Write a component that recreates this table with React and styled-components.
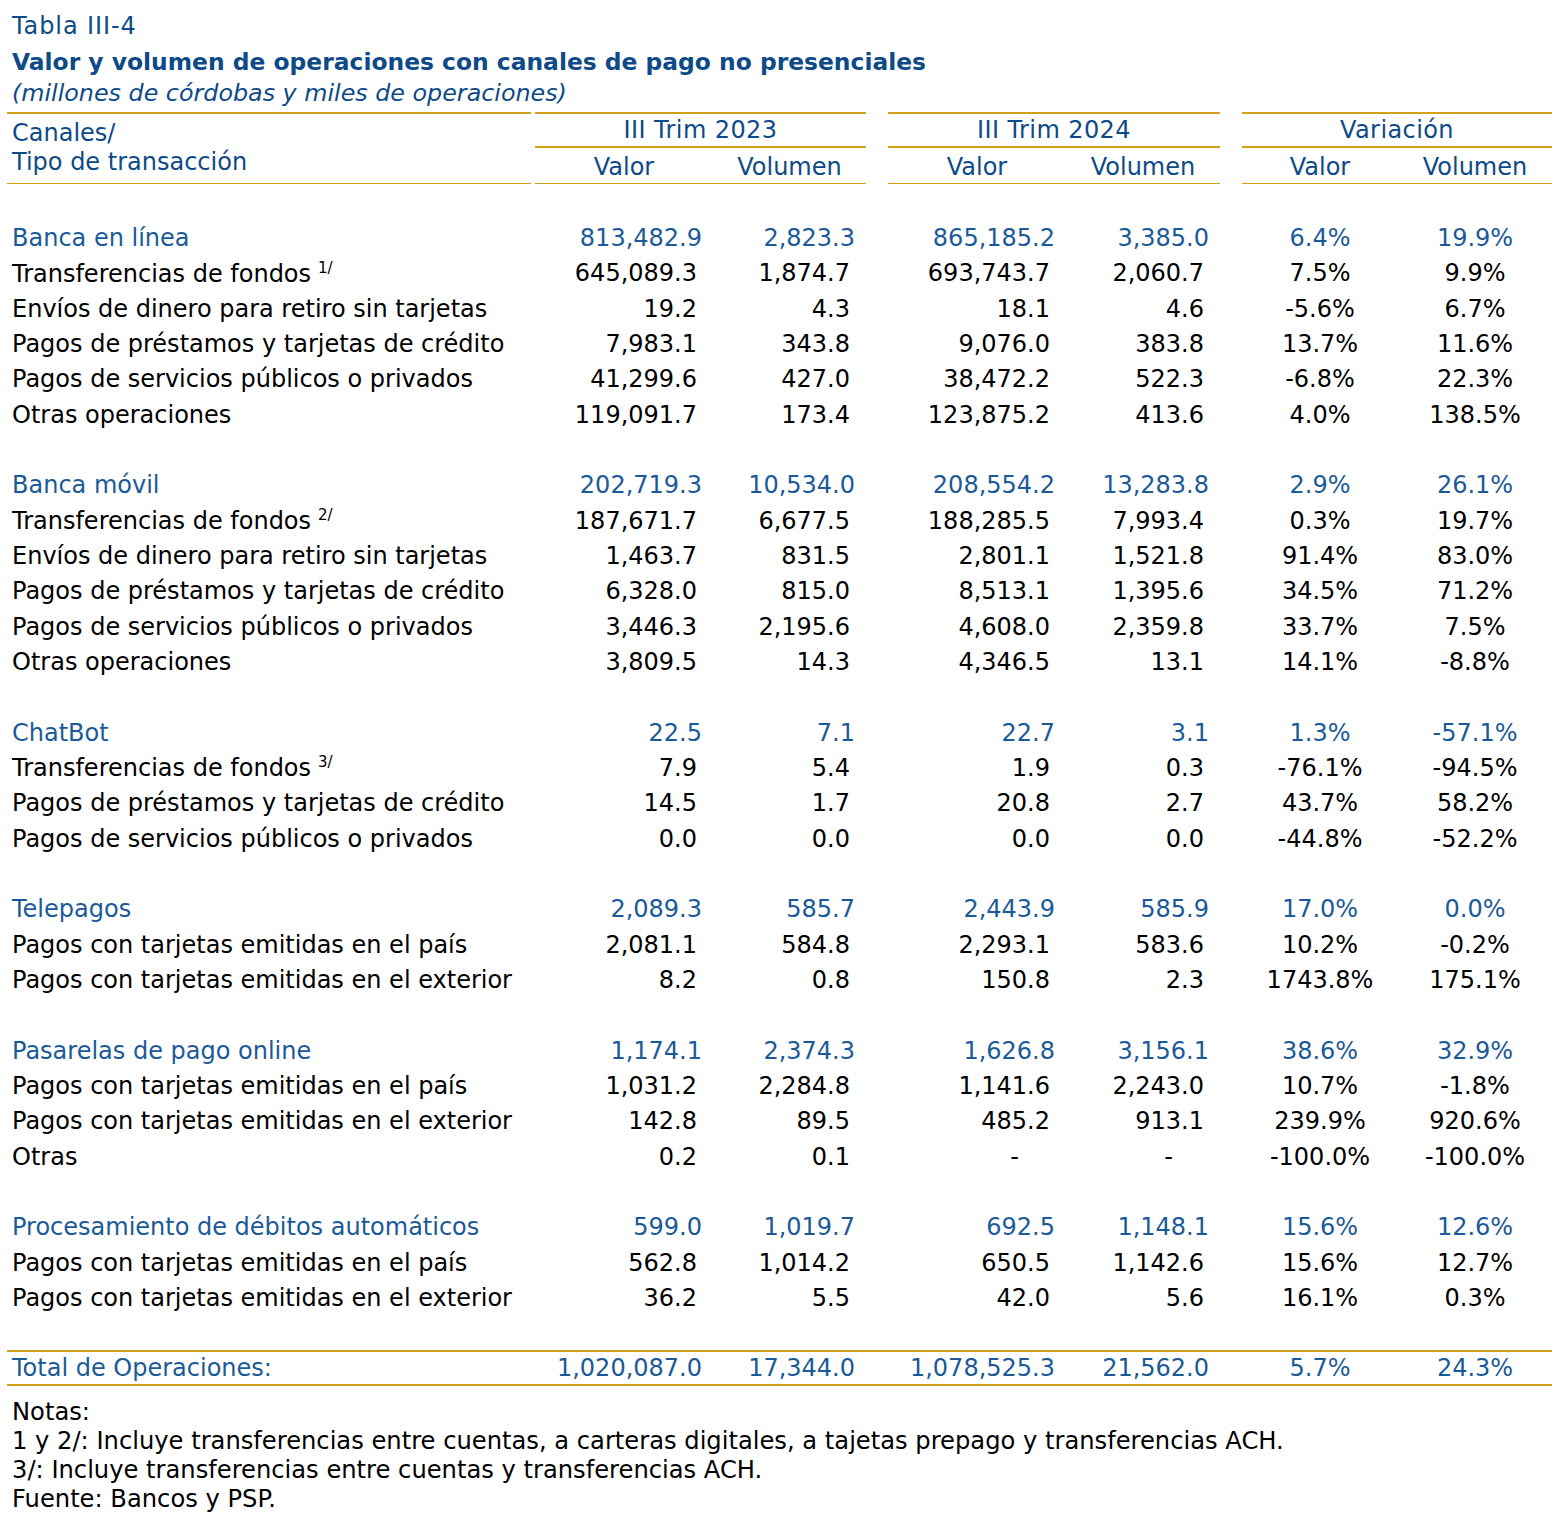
import React from "react";
import styled, { createGlobalStyle } from "styled-components";

const BLUE = "#1b5a98";
const NAVY = "#0d4a87";
const GOLD = "#d4a017";
const COLS = "524px 4px 178px 153px 22px 178px 154px 22px 156px 154px";
const ROW_H = "35.33px";

const sections = [
  {
    name: "Banca en línea",
    total: ["813,482.9", "2,823.3", "865,185.2", "3,385.0", "6.4%", "19.9%"],
    rows: [
      ["Transferencias de fondos", "1/", "645,089.3", "1,874.7", "693,743.7", "2,060.7", "7.5%", "9.9%"],
      ["Envíos de dinero para retiro sin tarjetas", null, "19.2", "4.3", "18.1", "4.6", "-5.6%", "6.7%"],
      ["Pagos de préstamos y tarjetas de crédito", null, "7,983.1", "343.8", "9,076.0", "383.8", "13.7%", "11.6%"],
      ["Pagos de servicios públicos o privados", null, "41,299.6", "427.0", "38,472.2", "522.3", "-6.8%", "22.3%"],
      ["Otras operaciones", null, "119,091.7", "173.4", "123,875.2", "413.6", "4.0%", "138.5%"],
    ],
  },
  {
    name: "Banca móvil",
    total: ["202,719.3", "10,534.0", "208,554.2", "13,283.8", "2.9%", "26.1%"],
    rows: [
      ["Transferencias de fondos", "2/", "187,671.7", "6,677.5", "188,285.5", "7,993.4", "0.3%", "19.7%"],
      ["Envíos de dinero para retiro sin tarjetas", null, "1,463.7", "831.5", "2,801.1", "1,521.8", "91.4%", "83.0%"],
      ["Pagos de préstamos y tarjetas de crédito", null, "6,328.0", "815.0", "8,513.1", "1,395.6", "34.5%", "71.2%"],
      ["Pagos de servicios públicos o privados", null, "3,446.3", "2,195.6", "4,608.0", "2,359.8", "33.7%", "7.5%"],
      ["Otras operaciones", null, "3,809.5", "14.3", "4,346.5", "13.1", "14.1%", "-8.8%"],
    ],
  },
  {
    name: "ChatBot",
    total: ["22.5", "7.1", "22.7", "3.1", "1.3%", "-57.1%"],
    rows: [
      ["Transferencias de fondos", "3/", "7.9", "5.4", "1.9", "0.3", "-76.1%", "-94.5%"],
      ["Pagos de préstamos y tarjetas de crédito", null, "14.5", "1.7", "20.8", "2.7", "43.7%", "58.2%"],
      ["Pagos de servicios públicos o privados", null, "0.0", "0.0", "0.0", "0.0", "-44.8%", "-52.2%"],
    ],
  },
  {
    name: "Telepagos",
    total: ["2,089.3", "585.7", "2,443.9", "585.9", "17.0%", "0.0%"],
    rows: [
      ["Pagos con tarjetas emitidas en el país", null, "2,081.1", "584.8", "2,293.1", "583.6", "10.2%", "-0.2%"],
      ["Pagos con tarjetas emitidas en el exterior", null, "8.2", "0.8", "150.8", "2.3", "1743.8%", "175.1%"],
    ],
  },
  {
    name: "Pasarelas de pago online",
    total: ["1,174.1", "2,374.3", "1,626.8", "3,156.1", "38.6%", "32.9%"],
    rows: [
      ["Pagos con tarjetas emitidas en el país", null, "1,031.2", "2,284.8", "1,141.6", "2,243.0", "10.7%", "-1.8%"],
      ["Pagos con tarjetas emitidas en el exterior", null, "142.8", "89.5", "485.2", "913.1", "239.9%", "920.6%"],
      ["Otras", null, "0.2", "0.1", "-", "-", "-100.0%", "-100.0%"],
    ],
  },
  {
    name: "Procesamiento de débitos automáticos",
    total: ["599.0", "1,019.7", "692.5", "1,148.1", "15.6%", "12.6%"],
    rows: [
      ["Pagos con tarjetas emitidas en el país", null, "562.8", "1,014.2", "650.5", "1,142.6", "15.6%", "12.7%"],
      ["Pagos con tarjetas emitidas en el exterior", null, "36.2", "5.5", "42.0", "5.6", "16.1%", "0.3%"],
    ],
  },
];

const grandTotal = ["1,020,087.0", "17,344.0", "1,078,525.3", "21,562.0", "5.7%", "24.3%"];
const numCols = [3, 4, 6, 7, 9, 10];

const GlobalStyle = createGlobalStyle`
  body {
    margin: 0;
    background: #ffffff;
    font-family: "DejaVu Sans", Verdana, sans-serif;
  }
`;

const Page = styled.div`
  width: 1545px;
  padding: 8px 0 0 7px;
`;

const Caption = styled.div`
  padding-left: 5px;
  margin-bottom: 6px;
`;

const Label = styled.div`
  font-size: 24px;
  letter-spacing: 0.9px;
  line-height: 36px;
  color: ${NAVY};
`;

const Title = styled.div`
  font-size: 23.4px;
  font-weight: bold;
  line-height: 36px;
  color: ${NAVY};
`;

const Subtitle = styled.div`
  font-size: 23.8px;
  font-style: italic;
  line-height: 26px;
  color: ${NAVY};
`;

const Head = styled.div`
  display: grid;
  grid-template-columns: ${COLS};
  grid-template-rows: 36px 36px;
  font-size: 24px;
  color: ${NAVY};
`;

const HeadLabel = styled.div`
  grid-column: 1;
  grid-row: 1 / span 2;
  border-top: 2px solid ${GOLD};
  border-bottom: 1px solid ${GOLD};
  padding: 5px 0 0 5px;
  line-height: 29px;
`;

const GroupHead = styled.div`
  grid-column: ${(p) => p.$col} / span 2;
  grid-row: 1;
  border-top: 2px solid ${GOLD};
  border-bottom: 2px solid ${GOLD};
  text-align: center;
  line-height: 33px;
  letter-spacing: 0.4px;
`;

const SubHead = styled.div`
  grid-column: ${(p) => p.$col};
  grid-row: 2;
  border-bottom: 1px solid ${GOLD};
  text-align: center;
  line-height: 35px;
  padding-top: 2px;
`;

const Spacer = styled.div`
  height: ${ROW_H};
`;

const Row = styled.div`
  display: grid;
  grid-template-columns: ${COLS};
  box-sizing: border-box;
  height: ${ROW_H};
  padding-top: 2px;
  align-items: center;
  font-size: 24px;
  color: ${(p) => (p.$head ? BLUE : "#000000")};
`;

const Name = styled.div`
  grid-column: 1;
  padding-left: 5px;
  white-space: nowrap;
`;

const Sup = styled.sup`
  font-size: 15px;
  vertical-align: 9px;
  margin-left: 7px;
`;

const Num = styled.div`
  grid-column: ${(p) => p.$col};
  text-align: ${(p) => (p.$center ? "center" : "right")};
  padding-right: ${(p) => (p.$center ? 0 : p.$pad)}px;
  white-space: nowrap;
`;

const TotalRow = styled(Row)`
  height: 36px;
  padding-top: 0;
  border-top: 2px solid ${GOLD};
  border-bottom: 2px solid ${GOLD};
  color: ${BLUE};
`;

const Notes = styled.div`
  margin-top: 12px;
  padding-left: 5px;
  font-size: 24.2px;
  line-height: 29px;
  color: #000000;
`;

const NumCells = ({ values, head }) =>
  values.map((v, i) => {
    const col = numCols[i];
    const center = i >= 4;
    let pad = head ? 11 : 16;
    if (v === "-") pad = 47;
    return (
      <Num key={col} $col={col} $center={center} $pad={pad}>
        {v}
      </Num>
    );
  });

const Section = ({ section }) => (
  <>
    <Row $head>
      <Name>{section.name}</Name>
      <NumCells values={section.total} head />
    </Row>
    {section.rows.map((r) => (
      <Row key={r[0] + r[2]}>
        <Name>
          {r[0]}
          {r[1] && <Sup>{r[1]}</Sup>}
        </Name>
        <NumCells values={r.slice(2)} />
      </Row>
    ))}
    <Spacer />
  </>
);

const App = () => (
  <Page>
    <GlobalStyle />
    <Caption>
      <Label>Tabla III-4</Label>
      <Title>Valor y volumen de operaciones con canales de pago no presenciales</Title>
      <Subtitle>(millones de córdobas y miles de operaciones)</Subtitle>
    </Caption>
    <Head>
      <HeadLabel>
        Canales/
        <br />
        Tipo de transacción
      </HeadLabel>
      <GroupHead $col={3}>III Trim 2023</GroupHead>
      <GroupHead $col={6}>III Trim 2024</GroupHead>
      <GroupHead $col={9}>Variación</GroupHead>
      {numCols.map((c, i) => (
        <SubHead key={c} $col={c}>
          {i % 2 === 0 ? "Valor" : "Volumen"}
        </SubHead>
      ))}
    </Head>
    <Spacer />
    {sections.map((s) => (
      <Section key={s.name} section={s} />
    ))}
    <TotalRow>
      <Name>Total de Operaciones:</Name>
      <NumCells values={grandTotal} head />
    </TotalRow>
    <Notes>
      <div>Notas:</div>
      <div>1 y 2/: Incluye transferencias entre cuentas, a carteras digitales, a tajetas prepago y transferencias ACH.</div>
      <div>3/: Incluye transferencias entre cuentas y transferencias ACH.</div>
      <div>Fuente: Bancos y PSP.</div>
    </Notes>
  </Page>
);

export default App;
